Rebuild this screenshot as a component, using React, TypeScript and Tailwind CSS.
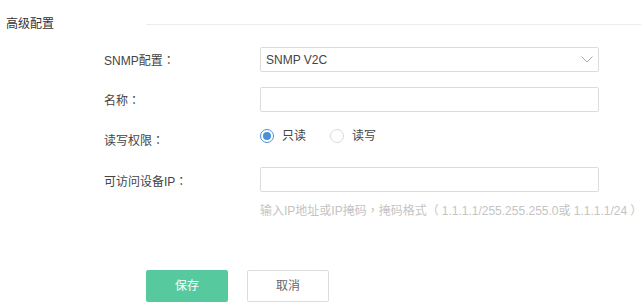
import { useState } from "react";

const font = { fontFamily: '"Liberation Sans", "Noto Sans CJK SC", sans-serif' };
// full-width punctuation drawn centred, as in the reference
const punct = { fontFamily: '"Noto Sans CJK TC", sans-serif' };

const P = ({ c, className = "" }: { c: string; className?: string }) => (
  <span style={punct} className={className}>{c}</span>
);

function Radio({ checked, label, onClick }: { checked: boolean; label: string; onClick: () => void }) {
  return (
    <label className="flex items-center gap-[8px] cursor-pointer" onClick={onClick}>
      <span
        className={
          "w-[14px] h-[14px] rounded-full border flex items-center justify-center " +
          (checked ? "border-[#4a90d9]" : "border-[#d9d9d9]")
        }
      >
        {checked && <span className="w-[8px] h-[8px] rounded-full bg-[#4a90d9]" />}
      </span>
      <span className="text-[12px] text-[#444]">{label}</span>
    </label>
  );
}

export default function App() {
  const [perm, setPerm] = useState<"ro" | "rw">("ro");

  return (
    <div className="w-full h-[305px] bg-white text-[12px] text-[#444]" style={font}>
      <div className="pt-[14px] flex items-center h-[34px]">
        <span className="w-[146px] pl-[6px] leading-[20px] text-[#333]">高级配置</span>
        <div className="flex-1 h-px bg-[#ececec]" />
      </div>

      <div className="mt-[13px] flex flex-col">
        <div className="flex items-center h-[25px]">
          <span className="w-[260px] pl-[104px] pt-[2px]">SNMP配置<P c="：" /></span>
          <div className="w-[339px] h-[25px] border border-[#dcdcdc] rounded-[2px] flex items-center justify-between pl-[5px] pr-[5px] text-[#444]">
            <span>SNMP V2C</span>
            <svg width="12" height="7" viewBox="0 0 12 7" fill="none">
              <path d="M0.5 0.5 L6 6 L11.5 0.5" stroke="#aaa" strokeWidth="1" />
            </svg>
          </div>
        </div>

        <div className="flex items-center h-[25px] mt-[15px]">
          <span className="w-[260px] pl-[104px] pt-[2px]">名称<P c="：" /></span>
          <input className="w-[339px] h-[25px] border border-[#dcdcdc] rounded-[2px] outline-none px-[5px]" />
        </div>

        <div className="flex items-center h-[25px] mt-[11px]">
          <span className="w-[260px] pl-[104px] pt-[10px]">读写权限<P c="：" /></span>
          <div className="flex items-center gap-[24px]">
            <Radio checked={perm === "ro"} label="只读" onClick={() => setPerm("ro")} />
            <Radio checked={perm === "rw"} label="读写" onClick={() => setPerm("rw")} />
          </div>
        </div>

        <div className="flex items-center h-[25px] mt-[19px]">
          <span className="w-[260px] pl-[104px] pt-[4px]">可访问设备IP<P c="：" /></span>
          <input className="w-[339px] h-[25px] border border-[#dcdcdc] rounded-[2px] outline-none px-[5px]" />
        </div>
        <div className="pl-[260px] mt-[10px] text-[#c4c4c4] whitespace-nowrap leading-[16px]">
          输入IP地址或IP掩码<P c="，" />掩码格式<P c="（" className="mr-[3px]" />1.1.1.1/255.255.255.0或 1.1.1.1/24<P c="）" className="ml-[3px]" />
        </div>
      </div>

      <div className="flex gap-[19px] pl-[146px] mt-[51px]">
        <button className="w-[82px] h-[32px] rounded-[2px] bg-[#56ca9e] text-white text-[12px]">保存</button>
        <button className="w-[82px] h-[32px] rounded-[2px] border border-[#dcdcdc] bg-white text-[#666] text-[12px]">取消</button>
      </div>
    </div>
  );
}
